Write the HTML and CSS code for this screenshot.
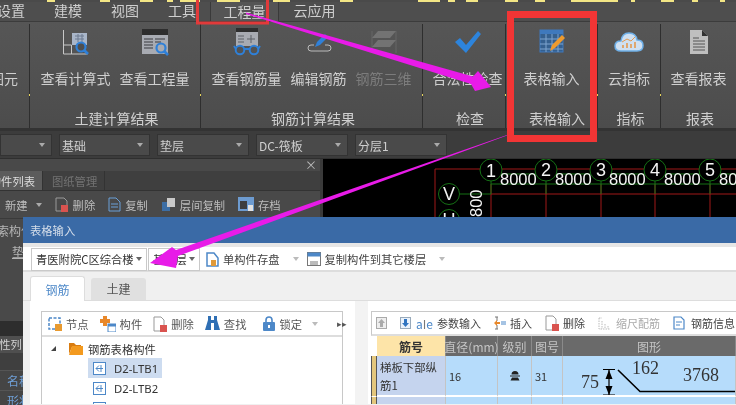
FILE: index.html
```html
<!DOCTYPE html>
<html lang="en">
<head>
    <meta charset="UTF-8">
    <meta name="viewport" content="width=device-width, initial-scale=1.0">
    <title>表格输入</title>
    <link rel="stylesheet" href="styles.css">
</head>
<body>
<div class="page">
    <svg class="title-strip" width="736" height="2" viewBox="0 0 736 2">
        <path d="M47 1h8M100 1h10M140 1h13M167 1h6M180 1h20M217 1h23M273 1h17M340 1h13M418 1h22M448 1h7M466 1h12M505 1h13M535 1h10M571 1h47M631 1h4M661 1h13M692 1h6M720 1h5" stroke="#f3e685" stroke-width="2"/>
    </svg>
    <div class="menu-tabs">
        <span class="menu-tab first">设置</span>
        <span class="menu-tab">建模</span>
        <span class="menu-tab">视图</span>
        <span class="menu-tab">工具</span>
        <span class="menu-tab active">工程量</span>
        <span class="menu-tab">云应用</span>
    </div>

    <div class="ribbon">
        <div class="group g1">
            <div class="btns end"><div class="btn"><div class="ico"></div><span>图元</span></div></div>
            <div class="group-label"></div>
        </div>
        <div class="group g2">
            <div class="btns">
                <div class="btn"><div class="ico">
                    <svg width="28" height="28" viewBox="0 0 28 28"><path d="M1.5 2v24h24" fill="none" stroke="#c8c8c8"/><path d="M1.5 17h8v9" fill="none" stroke="#c8c8c8"/><rect x="10" y="5" width="15" height="12" fill="#a9b6c9"/><path d="M13 8h9M13 11h9M16 6v8M20 6v8" stroke="#6d7a90"/><circle cx="19" cy="19" r="4.500" fill="#4f4f4f" stroke="#2f80d8" stroke-width="2.200"/><path d="M22 22l4 4" stroke="#2f80d8" stroke-width="2.600"/></svg>
                </div><span>查看计算式</span></div>
                <div class="btn"><div class="ico">
                    <svg width="28" height="28" viewBox="0 0 28 28"><rect x="1" y="1" width="26" height="25" fill="#a8abb2"/><rect x="1" y="1" width="26" height="6" fill="#2e2e2e"/><path d="M3 11h9M3 14h9M3 17h9M3 20h9M14 11h10M14 14h6" stroke="#5d6066" stroke-width="1.300"/><circle cx="20" cy="20" r="4.500" fill="#a8abb2" stroke="#2f80d8" stroke-width="2.200"/><path d="M23 23l4 4" stroke="#2f80d8" stroke-width="2.600"/></svg>
                </div><span>查看工程量</span></div>
            </div>
            <div class="group-label">土建计算结果</div>
        </div>
        <div class="group g3">
            <div class="btns">
                <div class="btn"><div class="ico">
                    <svg width="28" height="28" viewBox="0 0 28 28"><rect x="3" y="0" width="22" height="4" fill="#2e2e2e"/><rect x="3" y="4" width="22" height="14" fill="#a8abb2"/><path d="M5 8h6M5 11h6M5 14h6M14 11h8M18 7v8" stroke="#5d6066"/><circle cx="7" cy="22" r="4.300" fill="none" stroke="#2f80d8" stroke-width="2"/><circle cx="21" cy="22" r="4.300" fill="none" stroke="#2f80d8" stroke-width="2"/><path d="M11 21h6M3 21l-2-3M25 21l2-3" stroke="#2f80d8" stroke-width="2"/></svg>
                </div><span>查看钢筋量</span></div>
                <div class="btn"><div class="ico">
                    <svg width="28" height="28" viewBox="0 0 28 28"><path d="M9 17H6q-3 0-3 3t3 3h17q3 0 3-3t-3-3h-3" fill="none" stroke="#bbb"/><path d="M10 19l2-5 8-8 3 3-8 8z" fill="#2f80d8"/></svg>
                </div><span>编辑钢筋</span></div>
                <div class="btn off"><div class="ico">
                    <svg width="28" height="28" viewBox="0 0 28 28"><path d="M2 3v22M26 3v22" stroke="#666"/><path d="M8 3h18l-6 7H2zM8 12h18l-6 7H2z" fill="#737373"/></svg>
                </div><span>钢筋三维</span></div>
            </div>
            <div class="group-label">钢筋计算结果</div>
        </div>
        <div class="group g4">
            <div class="btns">
                <div class="btn"><div class="ico">
                    <svg width="28" height="28" viewBox="0 0 28 28"><path d="M1 14l5-4 6 7L24 3l3 3-15 19z" fill="#2d84dc"/></svg>
                </div><span>合法性检查</span></div>
            </div>
            <div class="group-label">检查</div>
        </div>
        <div class="group g5">
            <div class="btns">
                <div class="btn"><div class="ico">
                    <svg width="26" height="26" viewBox="0 0 26 26"><rect x="1" y="1" width="23" height="22" fill="#35608f" stroke="#3f79bd"/><rect x="1" y="1" width="23" height="4" fill="#3f79bd"/><path d="M1 10h23M1 15h23M1 20h23M7 5v18M13 5v18M19 5v18" stroke="#7fa4cf"/><path d="M11 22l2-6 10-10 3 3-10 10z" fill="#ee9a2d"/></svg>
                </div><span>表格输入</span></div>
            </div>
            <div class="group-label">表格输入</div>
        </div>
        <div class="group g6">
            <div class="btns">
                <div class="btn"><div class="ico">
                    <svg width="30" height="22" viewBox="0 0 30 22"><path d="M7 20q-6 0-6-5t6-5q1-8 8-8t8 7q6 0 6 5.500t-6 5.500z" fill="#cfe0f2" stroke="#6fb0e8" stroke-width="1.500"/><path d="M9 17v-3M13 17v-5M17 17v-4M21 17v-6" stroke="#e39a50" stroke-width="1.600"/><path d="M8 11l5-3 4 2 4-4" fill="none" stroke="#e39a50"/></svg>
                </div><span>云指标</span></div>
            </div>
            <div class="group-label">指标</div>
        </div>
        <div class="group g7">
            <div class="btns">
                <div class="btn"><div class="ico">
                    <svg width="20" height="26" viewBox="0 0 20 26"><path d="M1 1h12l6 6v18H1z" fill="#bfbfbf"/><path d="M13 1l6 6h-6z" fill="#333"/><path d="M4 9h6M4 12h12M4 15h12M4 18h12M4 21h12" stroke="#555"/></svg>
                </div><span>查看报表</span></div>
            </div>
            <div class="group-label">报表</div>
        </div>
    </div>

    <div class="combo-row">
        <div class="combo w52"><span></span><i class="caret"></i></div>
        <div class="combo w90"><span>基础</span><i class="caret"></i></div>
        <div class="combo w92"><span>垫层</span><i class="caret"></i></div>
        <div class="combo w91"><span>DC-筏板</span><i class="caret"></i></div>
        <div class="combo w92"><span>分层1</span><i class="caret"></i></div>
    </div>

    <div class="main">
        <div class="side">
            <div class="side-close">×</div>
            <div class="side-tabs">
                <span class="side-tab on">构件列表</span>
                <span class="side-tab">图纸管理</span>
            </div>
            <div class="side-tools">
                <span>新建</span><i class="caret"></i>
                <svg class="gap" width="14" height="15" viewBox="0 0 14 15"><path d="M1 1h8l3 3v10H1z" fill="none" stroke="#9a9a9a"/><rect x="6" y="8" width="7" height="7" fill="#d9534f"/></svg><span>删除</span>
                <svg class="gap" width="13" height="15" viewBox="0 0 13 15"><path d="M1 1h7l4 4v9H1z" fill="none" stroke="#6aa0d8"/><path d="M3 7h7M3 10h7" stroke="#6aa0d8"/></svg><span>复制</span>
                <svg class="gap" width="15" height="15" viewBox="0 0 15 15"><rect x="1" y="5" width="8" height="9" fill="#3c6ea5"/><rect x="6" y="1" width="8" height="9" fill="#c9c9c9"/></svg><span>层间复制</span>
                <svg class="gap" width="16" height="15" viewBox="0 0 16 15"><rect x="0" y="0" width="16" height="14" fill="#6d9bd0"/><rect x="2" y="4" width="7" height="8" fill="#3d3d3d"/><rect x="10" y="8" width="5" height="6" fill="#e2e2e2"/></svg><span>存档</span>
            </div>
            <div class="side-list">
                <div class="side-search">索构件</div>
                <div class="side-item">垫层</div>
            </div>
            <div class="side-band"></div>
            <div class="side-props">
                <div class="prop-title">属性列</div>
                <div class="prop-row"></div>
                <div class="prop-row blue">名称</div>
                <div class="prop-row blue">形状</div>
            </div>
        </div>
        <div class="cad">
            <svg width="413" height="58" viewBox="323 159 413 58">
                <path d="M435 217V169H736M491 194H736M491 184V217M546 184V217M601 184V217M655 184V217M710 184V217" fill="none" stroke="#a01818"/>
                <path d="M491 181V194M546 181V194M601 181V194M655 181V194M710 181V194M491 184H736M491 174H736M460 194H491" fill="none" stroke="#157015"/>
                <g fill="#000" stroke="#157015">
                    <circle cx="491" cy="170" r="11"/><circle cx="546" cy="170" r="11"/><circle cx="601" cy="170" r="11"/><circle cx="655" cy="170" r="11"/><circle cx="710" cy="170" r="11"/>
                    <circle cx="449" cy="194" r="10.500"/><circle cx="449" cy="220" r="10.500"/>
                </g>
                <g class="cad-num">
                    <text x="491" y="177" text-anchor="middle">1</text><text x="546" y="176" text-anchor="middle">2</text><text x="601" y="176" text-anchor="middle">3</text><text x="655" y="176" text-anchor="middle">4</text><text x="710" y="176" text-anchor="middle">5</text>
                    <text class="dim" x="500" y="185">8000</text><text class="dim" x="555" y="185">8000</text><text class="dim" x="609" y="185">8000</text><text class="dim" x="664" y="185">8000</text><text class="dim" x="719" y="185">8000</text>
                    <text x="449" y="200" text-anchor="middle">V</text><text x="449" y="226" text-anchor="middle">U</text>
                    <text class="dim" transform="translate(482 217) rotate(-90)" x="0" y="0">800</text>
                </g>
            </svg>
        </div>
    </div>

    <div class="dialog">
        <div class="dialog-title">表格输入</div>
        <div class="dialog-edge"></div>
        <div class="dialog-bar">
            <div class="pick p1"><span>青医附院C区综合楼</span><i class="caret"></i></div>
            <div class="pick p2"><span>基础层</span><i class="caret"></i></div>
            <div class="bar-item">
                <svg width="13" height="15" viewBox="0 0 13 15"><path d="M1 1v13h11V6L8 1z" fill="none" stroke="#4d88c8" stroke-width="1.500"/><rect x="5" y="8" width="5" height="6" fill="#e09a3a"/></svg>
                <span>单构件存盘</span><i class="caret light"></i>
            </div>
            <div class="bar-item">
                <svg width="14" height="14" viewBox="0 0 14 14"><rect x=".5" y=".5" width="13" height="13" fill="#fff" stroke="#777"/><rect x=".5" y=".5" width="13" height="4" fill="#4d88c8"/><rect x="3" y="9" width="8" height="4" fill="#bbb"/></svg>
                <span>复制构件到其它楼层</span><i class="caret light"></i>
            </div>
        </div>
        <div class="dialog-tabs">
            <span class="dtab on">钢筋</span>
            <span class="dtab">土建</span>
        </div>
        <div class="dialog-body">
            <div class="tree-pane">
                <div class="tree-box">
                    <div class="toolbar tree-tools">
                        <span class="tool"><svg width="14" height="14" viewBox="0 0 14 14"><rect x="1" y="1" width="11" height="11" fill="none" stroke="#4d88c8" stroke-dasharray="3 1.500" stroke-width="1.500"/><rect x="7" y="7" width="7" height="7" fill="#e89a30"/></svg>节点</span>
                        <span class="tool"><svg width="16" height="16" viewBox="0 0 16 16"><path d="M3 0h4v3h3v4H7v3H3V7H0V3h3z" fill="#e8882a"/><rect x="8" y="8" width="8" height="8" fill="#fff" stroke="#4d88c8"/><rect x="8" y="8" width="8" height="2.500" fill="#4d88c8"/></svg>构件</span>
                        <span class="tool"><svg width="14" height="16" viewBox="0 0 14 16"><path d="M1 1h7l3 3v11H1z" fill="#fff" stroke="#999"/><rect x="7" y="9" width="7" height="7" fill="#d9534f"/></svg>删除</span>
                        <span class="tool"><svg width="15" height="15" viewBox="0 0 15 15"><path d="M3 0h3v4h3V0h3v4l3 10H9V7H6v7H0L3 4z" fill="#2f6fb4"/></svg>查找</span>
                        <span class="tool lock"><svg width="12" height="15" viewBox="0 0 12 15"><path d="M3 6V4a3 3 0 016 0v2" fill="none" stroke="#4d88c8" stroke-width="1.600"/><rect y="6" width="12" height="9" rx="1" fill="#4d88c8"/><rect x="5" y="9" width="2" height="3" fill="#fff"/></svg>锁定<i class="caret light"></i></span>
                        <span class="more">▸▸</span>
                    </div>
                    <div class="tree">
                        <div class="tree-root">
                            <i class="expand"></i>
                            <svg width="14" height="13" viewBox="0 0 14 13"><path d="M0 1h5l2 2h5v2H3L0 12z" fill="#d97c10"/><path d="M3 4h11v9H0z" fill="#f39a1f"/></svg>
                            <span>钢筋表格构件</span>
                        </div>
                        <div class="tree-node sel"><svg class="node-ico" width="13" height="13" viewBox="0 0 13 13"><rect x=".5" y=".5" width="12" height="12" fill="#fff" stroke="#4d88c8"/><path d="M3 6.500h7M6 3.500l-3 3 3 3M8 3v7" fill="none" stroke="#4d88c8"/></svg><span>D2-LTB1</span></div>
                        <div class="tree-node"><svg class="node-ico" width="13" height="13" viewBox="0 0 13 13"><rect x=".5" y=".5" width="12" height="12" fill="#fff" stroke="#4d88c8"/><path d="M3 6.500h7M6 3.500l-3 3 3 3M8 3v7" fill="none" stroke="#4d88c8"/></svg><span>D2-LTB2</span></div>
                        <div class="tree-node"><svg class="node-ico" width="13" height="13" viewBox="0 0 13 13"><rect x=".5" y=".5" width="12" height="12" fill="#fff" stroke="#4d88c8"/><path d="M3 6.500h7M6 3.500l-3 3 3 3M8 3v7" fill="none" stroke="#4d88c8"/></svg><span>D2-LTB3</span></div>
                    </div>
                </div>
            </div>
            <div class="splitter"></div>
            <div class="table-pane">
                <div class="toolbar table-tools">
                    <svg class="arrow-btn" width="11" height="12" viewBox="0 0 11 12"><rect x=".5" y=".5" width="10" height="11" fill="#eee" stroke="#aaa"/><path d="M5.500 2l3.500 4H7v4H4V6H2z" fill="#aaa"/></svg>
                    <svg class="arrow-btn b" width="11" height="12" viewBox="0 0 11 12"><rect x=".5" y=".5" width="10" height="11" fill="#eaf2fb" stroke="#9ab"/><path d="M5.500 10L2 6h2V2h3v4h2z" fill="#2f74c0"/></svg>
                    <span class="ttool t1"><b class="aje">a<u>I</u>e</b>参数输入</span>
                    <span class="ttool t2"><svg width="12" height="14" viewBox="0 0 12 14"><path d="M1 1h3M1 13h3M3 1v4M3 9v4" stroke="#777"/><path d="M0 7l3-3v2h3v2H3v2z" fill="#e8882a"/><path d="M7 6h5M7 8h5" stroke="#4d88c8"/></svg>插入</span>
                    <span class="ttool t3"><svg width="14" height="16" viewBox="0 0 14 16"><path d="M1 1h7l3 3v11H1z" fill="#fff" stroke="#999"/><rect x="7" y="9" width="7" height="7" fill="#d9534f"/></svg>删除</span>
                    <span class="ttool t4 off"><svg width="12" height="13" viewBox="0 0 12 13"><path d="M1 1v11h11M1 1h3M4 4v8M7 7v5M10 9v3" fill="none" stroke="#bbb" stroke-dasharray="1.500 1"/></svg>缩尺配筋</span>
                    <span class="ttool t5"><svg width="12" height="14" viewBox="0 0 12 14"><path d="M1 1h7l3 3v9H1z" fill="#fff" stroke="#4d88c8" stroke-width="1.200"/><path d="M3 6h6M3 9h4" stroke="#4d88c8"/></svg>钢筋信息</span>
                </div>
                <div class="grid">
                    <div class="gh blank"></div>
                    <div class="gh key">筋号</div>
                    <div class="gh">直径(mm)</div>
                    <div class="gh">级别</div>
                    <div class="gh">图号</div>
                    <div class="gh">图形</div>
                    <div class="handle"></div>
                    <div class="gc name">梯板下部纵筋1</div>
                    <div class="gc num">16</div>
                    <div class="gc mid">
                        <svg width="12" height="10" viewBox="0 0 12 10"><path d="M6 0a3.500 3.500 0 013.500 3.500h-7A3.500 3.500 0 016 0zM1 4.500h10v1H1zM3 6.500h6l1.500 3h-9z" fill="#222"/></svg>
                    </div>
                    <div class="gc num">31</div>
                    <div class="gc shape">
                        <svg width="173" height="40" viewBox="564 358 173 40">
                            <text class="fig" x="582" y="390">75</text>
                            <text class="fig" x="633" y="376">162</text>
                            <text class="fig" x="684" y="383">3768</text>
                            <path d="M604 371.500h12M604 397h12M610 372v25" stroke="#000" stroke-width="1.200"/>
                            <path d="M610 372l-3.500 9h7zM610 397l-3.500-9h7z" fill="#000"/>
                            <path d="M619 372l22 21.500h96" fill="none" stroke="#000" stroke-width="1.600"/>
                        </svg>
                    </div>
                    <div class="handle"></div>
                    <div class="gc name"></div>
                    <div class="gc"></div>
                    <div class="gc"></div>
                    <div class="gc"></div>
                    <div class="gc shape"></div>
                </div>
            </div>
        </div>
    </div>

    <svg class="marks" width="736" height="405" viewBox="0 0 736 405">
        <rect x="197.500" y="-6" width="70" height="29" fill="none" stroke="#e23a3a" stroke-width="3"/>
        <polygon points="246,12.500 473,76.500 478,71 491,87 475,91 471,84 246,14" fill="#e81be8"/>
        <rect x="510.500" y="14.500" width="83" height="124" fill="none" stroke="#f23535" stroke-width="7"/>
        <polygon points="507,135 176,250 172,247 150,263 176,268 178,256 507,135.500" fill="#e81be8"/>
    </svg>
</div>
</body>
</html>
```

FILE: styles.css
```css
* {
    box-sizing: border-box;
}
html, body {
    margin: 0;
    padding: 0;
    background: #4a4a4a;
    overflow: hidden;
}
.page {
    position: relative;
    width: 736px;
    height: 405px;
    overflow: hidden;
    font-family: "Noto Sans CJK SC", "Noto Sans", sans-serif;
    font-size: 14px;
    color: #cfcfcf;
    background: #4a4a4a;
    filter: blur(0.5px);
}
.caret {
    display: inline-block;
    width: 0;
    height: 0;
    border-left: 3px solid transparent;
    border-right: 3px solid transparent;
    border-top: 4px solid #aaa;
}
.caret.light {
    border-top-color: #bbb;
    margin-left: 9px;
}

/* top menu */
.title-strip {
    display: block;
}
.menu-tabs {
    height: 19px;
    display: flex;
    align-items: center;
    padding-bottom: 2px;
    background: #4e4e4e;
    line-height: 17px;
}
.menu-tab {
    padding: 0 14.500px;
}
.menu-tab.first {
    margin-left: -17.500px;
}
.menu-tab.active {
    height: 19px;
    line-height: 19px;
    margin-bottom: -2px;
    padding: 0 12.500px 2px;
    background: #555;
    border-left: 1px solid #3a3a3a;
    border-right: 1px solid #3a3a3a;
    margin-left: -0.500px;
}

/* ribbon */
.ribbon {
    height: 110px;
    display: flex;
    background: linear-gradient(#565656, #4c4c4c);
    border-top: 1px solid #3c3c3c;
    border-bottom: 3px solid #333;
}
.group {
    position: relative;
    display: flex;
    flex-direction: column;
    border-right: 1px solid #2e2e2e;
    margin-top: 2px;
    flex: none;
}
.group::after {
    content: "";
    position: absolute;
    right: -1px;
    top: 70px;
    width: 1px;
    height: 2px;
    background: #e6d35a;
}
.g1 { width: 30px; }
.g2 { width: 171px; }
.g3 { width: 222px; }
.g4 { width: 83px; }
.g5 { width: 92px; }
.g6 { width: 63px; }
.g7 { width: 75px; border-right: 0; }
.g7::after { display: none; }
.btns {
    display: flex;
    justify-content: center;
    gap: 9px;
    height: 77px;
}
.btns.end {
    justify-content: flex-end;
    padding-right: 11px;
}
.btn {
    display: flex;
    flex-direction: column;
    align-items: center;
    white-space: nowrap;
}
.btn.off {
    color: #7c7c7c;
}
.ico {
    height: 38px;
    padding-bottom: 3px;
    margin-bottom: 6px;
    display: flex;
    align-items: center;
    justify-content: center;
}
.btn span {
    line-height: 20px;
}
.group-label {
    text-align: center;
    line-height: 20px;
    padding-left: 3px;
    margin-top: 10px;
}
.g4 .btns { padding-left: 7px; }
.g4 .group-label { padding-left: 12px; }
.g5 .group-label { padding-left: 11px; }

/* combo row */
.combo-row {
    height: 28px;
    display: flex;
    align-items: flex-start;
    gap: 7px;
    padding-top: 3px;
    background: #3c3c3c;
    border-bottom: 1px solid #2f2f2f;
}
.combo {
    height: 22px;
    display: flex;
    align-items: center;
    justify-content: space-between;
    padding: 0 6px 0 2px;
    background: #4a4a4a;
    border: 1px solid #333;
    font-size: 12px;
    flex: none;
}
.w52 { width: 52px; }
.w90 { width: 91px; }
.w91 { width: 92px; }
.w92 { width: 92px; }

/* left panel + canvas */
.main {
    height: 246px;
    display: flex;
}
.side {
    position: relative;
    width: 323px;
    flex: none;
    background: #494949;
    border-right: 3px solid #3a3a3a;
}
.side-close {
    position: absolute;
    right: 3px;
    top: -1px;
    font-size: 12px;
    line-height: 14px;
    color: #bbb;
}
.side-tabs {
    margin-top: 12px;
    height: 20px;
    display: flex;
    background: #3f3f3f;
    font-size: 11.300px;
    line-height: 20px;
    border-bottom: 1px solid #333;
}
.side-tab {
    width: 62px;
    padding-left: 9px;
    color: #727272;
    border-right: 1px solid #333;
}
.side-tab.on {
    width: 43px;
    padding: 0 7px 0 0;
    color: #ddd;
    background: #5c5c5c;
    direction: rtl;
    overflow: hidden;
    white-space: nowrap;
}
.side-tools {
    height: 27px;
    display: flex;
    align-items: center;
    padding-left: 5px;
    font-size: 11.300px;
    white-space: nowrap;
    color: #bdbdbd;
}
.side-tools .caret {
    margin-left: 8px;
}
.side-tools .gap {
    margin-left: 13px;
    margin-right: 4px;
}
.side-list {
    height: 103px;
    border-top: 1px solid #3a3a3a;
    font-size: 12px;
    line-height: 18px;
    overflow: hidden;
    color: #b5b5b5;
}
.side-search {
    margin-left: -3px;
    padding-top: 3px;
}
.side-item {
    padding: 3px 0 0 12px;
    text-decoration: underline;
    white-space: nowrap;
}
.side-band {
    height: 15px;
    background: #2d2d2d;
}
.side-props {
    font-size: 12px;
}
.prop-title {
    height: 17px;
    line-height: 17px;
    background: #4f4f4f;
    margin-left: -12px;
    font-size: 11.300px;
    white-space: nowrap;
}
.prop-row {
    height: 18px;
    line-height: 20px;
    padding-left: 7px;
    white-space: nowrap;
    background: #3f3f3f;
    border-bottom: 1px solid #555;
}
.prop-row.blue {
    height: 20px;
    color: #6f9fd6;
    background: #454545;
}
.cad {
    flex: 1;
    height: 58px;
    background: #000;
    overflow: hidden;
}
.cad svg {
    display: block;
}
.cad-num text {
    fill: #f4f4f4;
    font-family: "Liberation Sans", sans-serif;
    font-size: 18px;
}
.cad-num text.dim {
    font-size: 16.500px;
}

/* dialog */
.dialog {
    position: absolute;
    left: 23px;
    right: 0;
    top: 217px;
    bottom: 0;
    background: #f0f0f0;
    color: #444;
    font-size: 11.300px;
}
.dialog-title {
    height: 26px;
    line-height: 26px;
    padding-left: 7px;
    background: #3a6aa6;
    color: #d5deea;
}
.dialog-edge {
    height: 4px;
    background: #e6e6e6;
}
.dialog-bar {
    height: 25px;
    display: flex;
    align-items: center;
    padding: 1px 0 0 8px;
    background: #fff;
    border-bottom: 2px solid #ddd;
    white-space: nowrap;
}
.pick {
    height: 23px;
    display: flex;
    align-items: center;
    justify-content: space-between;
    border: 1px solid #c9c9c9;
    padding: 0 4px;
    color: #333;
}
.pick .caret {
    border-top-color: #666;
}
.p1 { width: 116px; }
.p2 { width: 52px; margin-left: 1px; }
.bar-item {
    display: flex;
    align-items: center;
    gap: 4px;
    margin-left: 6px;
}
.bar-item + .bar-item {
    margin-left: 8px;
}
.dialog-tabs {
    height: 29px;
    display: flex;
    align-items: flex-end;
    padding-left: 7px;
    gap: 6px;
    border-bottom: 1px solid #ddd;
}
.dtab {
    width: 55px;
    height: 22px;
    line-height: 22px;
    text-align: center;
    background: #e0e0e0;
    border-radius: 3px 3px 0 0;
    font-size: 12px;
    color: #555;
}
.dtab.on {
    height: 25px;
    line-height: 25px;
    margin-bottom: -1px;
    background: #fff;
    border: 1px solid #ddd;
    border-bottom: 0;
    color: #4d88c8;
}
.dialog-body {
    height: 103px;
    display: flex;
    margin-left: 7px;
    overflow: hidden;
}
.tree-pane {
    width: 325px;
    flex: none;
    padding: 10px 12px 0 11px;
    background: #fff;
}
.tree-box {
    height: 100%;
    border: 1px solid #c8c8c8;
    border-bottom: 0;
}
.toolbar {
    height: 25px;
    display: flex;
    align-items: center;
    background: #fff;
    border-bottom: 2px solid #ddd;
    white-space: nowrap;
}
.tree-tools {
    padding-left: 6px;
}
.tool {
    display: flex;
    align-items: center;
    gap: 4px;
    margin-right: 11px;
    color: #555;
}
.tool.lock {
    margin-left: 6px;
}
.tool .caret {
    margin-left: 6px;
}
.more {
    font-size: 9px;
    margin-left: 8px;
    color: #555;
}
.tree {
    padding: 2px 0 0 9px;
    color: #333;
}
.tree-root {
    height: 19px;
    display: flex;
    align-items: center;
    gap: 5px;
}
.expand {
    width: 0;
    height: 0;
    border-left: 5px solid transparent;
    border-bottom: 5px solid #444;
    margin-right: 8px;
}
.tree-node {
    width: 74px;
    height: 20px;
    margin-left: 37px;
    display: flex;
    align-items: center;
    gap: 8px;
    padding-left: 5px;
    font-family: "Noto Sans", sans-serif;
}
.tree-node.sel {
    background: #cddcf0;
}
.node-ico {
    flex: none;
}
.splitter {
    width: 13px;
    flex: none;
    background: #f3f3f3;
}
.table-pane {
    flex: 1;
    min-width: 0;
    padding: 10px 0 0 3px;
    background: #fff;
}
.table-tools {
    position: relative;
    border-top: 1px solid #c8c8c8;
    border-left: 1px solid #c8c8c8;
    font-size: 11px;
    padding-left: 4px;
}
.arrow-btn.b {
    margin-left: 13px;
}
.ttool {
    display: flex;
    align-items: center;
    gap: 4px;
    margin-left: 13px;
}
.ttool.t1 { margin-left: 5px; }
.ttool.t4 { margin-left: 13px; gap: 6px; }
.ttool.t5 { margin-left: 13px; gap: 6px; }
.ttool.off {
    color: #aaa;
}
.aje {
    font-weight: normal;
    font-size: 12px;
    color: #4d88c8;
}
.aje u {
    text-decoration: none;
    color: #777;
}
.grid {
    display: grid;
    grid-template-columns: 6px 69px 52px 34px 31px 173px;
    grid-template-rows: 20px 41px 20px;
    font-size: 11px;
}
.gh {
    display: flex;
    align-items: center;
    justify-content: center;
    background: #6a6a6a;
    color: #c4c4c4;
    font-size: 12px;
    border-right: 1px solid #8a8a8a;
    white-space: nowrap;
}
.gh.blank {
    background: #fff;
    border: 0;
}
.gh.key {
    background: #fde4a8;
    color: #333;
    font-weight: bold;
}
.handle {
    background: #e4c77c;
    border-left: 1px solid #555;
    border-right: 1px solid #555;
    border-bottom: 1px solid #fff;
}
.gc {
    background: #b6dcfb;
    color: #333;
    border-right: 1px solid #c4c4c4;
    border-bottom: 2px solid #fff;
    display: flex;
    align-items: center;
    padding-left: 3px;
}
.gc.name {
    background: #c5d4ee;
    padding: 0 3px;
    font-size: 11.400px;
    line-height: 18px;
}
.gc.mid {
    padding: 0;
    justify-content: center;
}
.gc.shape {
    padding: 0;
    overflow: hidden;
}
.gc.shape svg {
    display: block;
    flex: none;
}
.fig {
    font-family: "Liberation Serif", serif;
    font-size: 18px;
    fill: #333;
}

/* annotations drawn on top of the screenshot */
.marks {
    position: absolute;
    left: 0;
    top: 0;
    pointer-events: none;
}
```
